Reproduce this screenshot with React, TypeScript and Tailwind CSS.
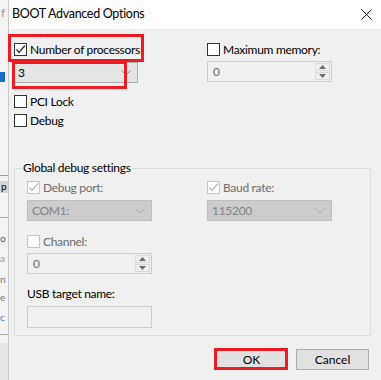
import React from "react";

const font = { fontFamily: 'Lato, "Noto Sans", sans-serif' };

function Check({ color }: { color: string }) {
  return (
    <svg width="11" height="11" viewBox="0 0 11 11" className="block">
      <polyline points="1.5,5.5 4,8.5 10,1.5" fill="none" stroke={color} strokeWidth="1.3" />
    </svg>
  );
}

function CheckBox({ label, checked, disabled }: { label: string; checked?: boolean; disabled?: boolean }) {
  return (
    <div className="flex items-center h-[13px]">
      <div
        className={
          "w-[13px] h-[13px] flex items-center justify-center shrink-0 bg-white border " +
          (disabled ? "border-[#c4c4c4]" : "border-[#333333]")
        }
      >
        {checked ? <Check color={disabled ? "#bcbcbc" : "#333333"} /> : null}
      </div>
      <span className={"ml-[3px] text-[12px] tracking-[-0.3px] leading-none whitespace-nowrap " + (disabled ? "text-[#6d6d6d]" : "text-black")}>
        {label}
      </span>
    </div>
  );
}

function Chevron({ color }: { color: string }) {
  return (
    <svg width="10" height="6" viewBox="0 0 10 6" className="block">
      <polyline points="0.5,0.5 5,5 9.5,0.5" fill="none" stroke={color} strokeWidth="1" />
    </svg>
  );
}

function Combo({ value, disabled, w }: { value: string; disabled?: boolean; w: string }) {
  return (
    <div
      className={
        "h-[21px] flex items-center justify-between pl-[4px] pr-[6px] border " +
        w +
        " " +
        (disabled ? "bg-[#cccccc] border-[#bfbfbf] text-[#838383]" : "bg-[#e5e5e5] border-[#adadad] text-black")
      }
    >
      <span className="text-[12px] tracking-[-0.3px] leading-none">{value}</span>
      <Chevron color={disabled ? "#a8a8a8" : "#8a8a8a"} />
    </div>
  );
}

function Spin({ value, w }: { value: string; w: string }) {
  return (
    <div className={"h-[21px] flex items-stretch border border-[#cccccc] bg-[#f0f0f0] " + w}>
      <div className="flex-1 flex items-center pl-[5px] text-[12px] leading-none text-[#6d6d6d]">{value}</div>
      <div className="w-[17px] flex flex-col gap-[1px] p-[1px]">
        <div className="flex-1 border border-[#dadada] flex items-center justify-center">
          <svg width="7" height="4" viewBox="0 0 7 4"><polygon points="0,4 3.5,0 7,4" fill="#6d6d6d" /></svg>
        </div>
        <div className="flex-1 border border-[#dadada] flex items-center justify-center">
          <svg width="7" height="4" viewBox="0 0 7 4"><polygon points="0,0 3.5,4 7,0" fill="#6d6d6d" /></svg>
        </div>
      </div>
    </div>
  );
}

function Strip() {
  return (
    <div className="relative w-[9px] shrink-0 h-full bg-[#f3f3f3] overflow-hidden border-r border-[#c8c8c8]">
      <span className="absolute left-[1px] top-[7px] text-[12px] text-[#9a9a9a] leading-none">f</span>
      <div className="absolute left-0 top-[72px] w-[5px] h-[10px] bg-[#1a6fc4]" />
      <div className="absolute left-0 top-[175px] w-[8px] h-[1px] bg-[#9a9a9a]" />
      <div className="absolute left-0 top-[181px] w-[8px] h-[12px] bg-[#d6d6d6]" />
      <span className="absolute left-[1px] top-[181px] text-[10px] text-black leading-none">p</span>
      <div className="absolute left-0 top-[217px] w-[8px] h-[1px] bg-[#b0b0b0]" />
      <span className="absolute left-0 top-[233px] text-[10px] text-[#1a5fb4] leading-none">o</span>
      <span className="absolute left-0 top-[253px] text-[10px] text-[#9a9a9a] leading-none">a</span>
      <span className="absolute left-0 top-[274px] text-[10px] text-[#777777] leading-none">n</span>
      <span className="absolute left-0 top-[292px] text-[10px] text-[#777777] leading-none">e</span>
      <span className="absolute left-0 top-[312px] text-[10px] text-[#3a7bd5] leading-none">c</span>
      <div className="absolute left-0 top-[334px] w-[8px] h-[1px] bg-[#b0b0b0]" />
      <div className="absolute left-0 top-[343px] w-[8px] h-[40px] bg-[#e6e6e6]" />
    </div>
  );
}

export default function App() {
  return (
    <div className="relative flex w-[381px] h-[380px] overflow-hidden bg-[#f0f0f0]" style={font}>
      <Strip />
      <div className="flex-1 flex flex-col">
        <div className="h-[29px] bg-white flex items-center justify-between pl-[3px] pr-[9px]">
          <span className="text-[12.5px] tracking-[-0.3px] text-black leading-none">BOOT Advanced Options</span>
          <svg width="11" height="11" viewBox="0 0 11 11" className="block">
            <line x1="0.5" y1="0.5" x2="10.5" y2="10.5" stroke="#111" strokeWidth="1" />
            <line x1="10.5" y1="0.5" x2="0.5" y2="10.5" stroke="#111" strokeWidth="1" />
          </svg>
        </div>
        <div className="flex-1 flex flex-col">
          <div className="flex pt-[14px] pl-[4px]">
            <div className="w-[194px] flex flex-col">
              <div className="pl-[1px]">
                <CheckBox label="Number of processors:" checked />
              </div>
              <div className="mt-[6px]">
                <Combo value="3" w="w-[125px]" />
              </div>
              <div className="mt-[12px] pl-[1px]">
                <CheckBox label="PCI Lock" />
              </div>
              <div className="mt-[6px] pl-[1px]">
                <CheckBox label="Debug" />
              </div>
            </div>
            <div className="flex flex-col">
              <CheckBox label="Maximum memory:" />
              <div className="mt-[5px]">
                <Spin value="0" w="w-[125px]" />
              </div>
            </div>
          </div>
          <div className="relative mt-[41px] ml-[5px] mr-[10px] h-[168px] border border-[#dcdcdc] px-[12px] pt-[12px]">
            <span className="absolute left-[7px] top-[-9px] px-[1px] bg-[#f0f0f0] text-[12px] tracking-[-0.3px] leading-[16px] text-black">
              Global debug settings
            </span>
            <div className="flex">
              <div className="w-[180px] flex flex-col">
                <CheckBox label="Debug port:" checked disabled />
                <div className="mt-[6px]">
                  <Combo value="COM1:" disabled w="w-[125px]" />
                </div>
                <div className="mt-[14px]">
                  <CheckBox label="Channel:" disabled />
                </div>
                <div className="mt-[5px]">
                  <Spin value="0" w="w-[125px]" />
                </div>
                <div className="mt-[14px] text-[12px] tracking-[-0.3px] leading-none text-black">USB target name:</div>
                <div className="mt-[6px] w-[125px] h-[22px] border border-[#cccccc] bg-[#f0f0f0]" />
              </div>
              <div className="flex flex-col">
                <CheckBox label="Baud rate:" checked disabled />
                <div className="mt-[6px]">
                  <Combo value="115200" disabled w="w-[125px]" />
                </div>
              </div>
            </div>
          </div>
          <div className="flex justify-end gap-[8px] pr-[12px] mt-[13px]">
            <button className="w-[73px] h-[21px] bg-[#e1e1e1] border border-[#adadad] text-[12px] leading-none text-black">
              OK
            </button>
            <button className="w-[73px] h-[21px] bg-[#e1e1e1] border border-[#adadad] text-[12px] leading-none text-black">
              Cancel
            </button>
          </div>
        </div>
      </div>
      <div className="absolute left-[8px] top-[34px] w-[136px] h-[28px] border-[3px] border-[#ed1c24]" />
      <div className="absolute left-[12px] top-[61px] w-[115px] h-[28px] border-[3px] border-[#ed1c24]" />
      <div className="absolute left-[214px] top-[348px] w-[74px] h-[22px] border-[3px] border-[#ed1c24]" />
    </div>
  );
}
